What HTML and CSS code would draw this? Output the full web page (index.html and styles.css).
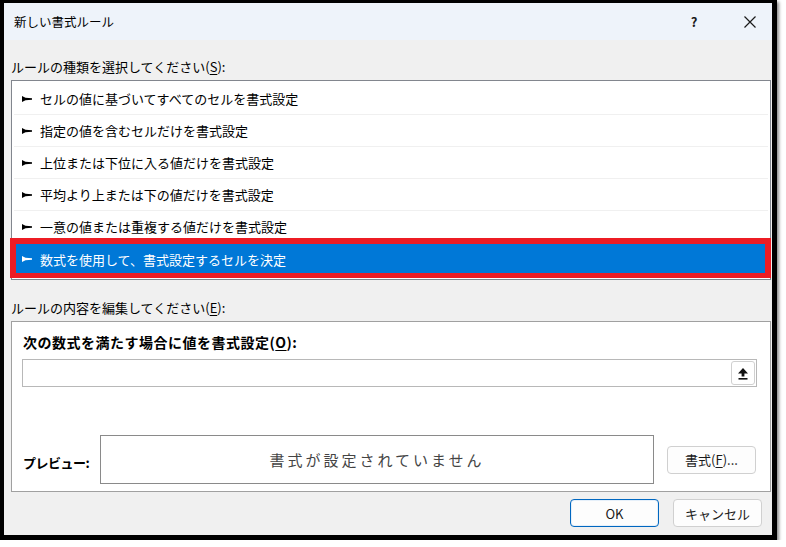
FILE: index.html
```html
<!DOCTYPE html>
<html lang="ja">
<head>
<meta charset="utf-8">
<title>新しい書式ルール</title>
<link rel="stylesheet" href="styles.css">
</head>
<body>
<div class="window">
  <div class="titlebar">
    <span class="title">新しい書式ルール</span>
    <span class="help">?</span>
    <span class="close"><svg width="12" height="12" viewBox="0 0 12 12"><path d="M0.5 0.5 L11.5 11.5 M11.5 0.5 L0.5 11.5" stroke="#1a1a1a" stroke-width="1.2" fill="none"/></svg></span>
  </div>
  <div class="content">
    <div class="label">ルールの種類を選択してください(<u>S</u>):</div>
    <div class="list">
      <div class="row"><svg class="arrow" width="10" height="6" viewBox="0 0 10 6"><path d="M0 0 L3.5 1.8 L10 2.2 L10 3.8 L3.5 4.2 L0 6 Z"/></svg>セルの値に基づいてすべてのセルを書式設定</div>
      <div class="row"><svg class="arrow" width="10" height="6" viewBox="0 0 10 6"><path d="M0 0 L3.5 1.8 L10 2.2 L10 3.8 L3.5 4.2 L0 6 Z"/></svg>指定の値を含むセルだけを書式設定</div>
      <div class="row"><svg class="arrow" width="10" height="6" viewBox="0 0 10 6"><path d="M0 0 L3.5 1.8 L10 2.2 L10 3.8 L3.5 4.2 L0 6 Z"/></svg>上位または下位に入る値だけを書式設定</div>
      <div class="row"><svg class="arrow" width="10" height="6" viewBox="0 0 10 6"><path d="M0 0 L3.5 1.8 L10 2.2 L10 3.8 L3.5 4.2 L0 6 Z"/></svg>平均より上または下の値だけを書式設定</div>
      <div class="row nosep"><svg class="arrow" width="10" height="6" viewBox="0 0 10 6"><path d="M0 0 L3.5 1.8 L10 2.2 L10 3.8 L3.5 4.2 L0 6 Z"/></svg>一意の値または重複する値だけを書式設定</div>
      <div class="row selected"><svg class="arrow" width="10" height="6" viewBox="0 0 10 6"><path d="M0 0 L3.5 1.8 L10 2.2 L10 3.8 L3.5 4.2 L0 6 Z"/></svg>数式を使用して、書式設定するセルを決定</div>
      <div class="highlight"></div>
    </div>
    <div class="label label2">ルールの内容を編集してください(<u>E</u>):</div>
    <div class="editbox">
      <div class="boldlabel">次の数式を満たす場合に値を書式設定(<u>O</u>):</div>
      <div class="formula">
        <span class="refbtn"><svg width="12" height="13" viewBox="0 0 12 13"><path d="M6 1 L11 6.5 L7.4 6.5 L7.4 9.5 L4.6 9.5 L4.6 6.5 L1 6.5 Z" fill="#111"/><rect x="1.5" y="11" width="9" height="1.6" fill="#111"/></svg></span>
      </div>
      <div class="preview-row">
        <span class="preview-label">プレビュー:</span>
        <div class="preview-box">書式が設定されていません</div>
        <span class="btn fmt">書式(<u>F</u>)...</span>
      </div>
    </div>
    <div class="buttons">
      <span class="btn ok">OK</span>
      <span class="btn cancel">キャンセル</span>
    </div>
  </div>
</div>
</body>
</html>
```
FILE: styles.css
```css
* { box-sizing: border-box; }
html, body { margin: 0; padding: 0; background: #ffffff; }
body {
  font-family: "Noto Sans CJK JP", "Noto Sans", sans-serif;
  color: #000;
  font-size: 13px;
}
.window {
  width: 777px;
  height: 540px;
  border-style: solid;
  border-color: #000;
  border-width: 3px 5px 5px 4px;
  background: #f0f0f0;
  box-shadow: 2px 2px 3px rgba(0,0,0,0.45);
  display: flex;
  flex-direction: column;
}
.titlebar {
  height: 37px;
  flex: none;
  background: #eef3fa;
  display: flex;
  align-items: center;
  padding-left: 10px;
}
.title { font-size: 12.5px; flex: 1; }
.help { font-size: 13px; font-weight: bold; width: 14px; text-align: center; margin-right: 42px; color: #1a1a1a; }
.close { width: 14px; display: flex; justify-content: center; margin-right: 15px; }
.content {
  padding: 0 1px 0 7px;
  display: flex;
  flex-direction: column;
}
.label {
  height: 20px;
  line-height: 20px;
  margin-top: 17px;
  white-space: nowrap;
}
.label2 { margin-top: 18px; }
u { text-decoration: underline; text-underline-offset: 2px; }
.list {
  position: relative;
  margin-top: 3px;
  height: 200px;
  border: 1px solid #82868e;
  background: #fff;
  padding: 2px 2px 0 2px;
}
.row {
  height: 32px;
  display: flex;
  align-items: center;
  padding-left: 8px;
  border-bottom: 1px solid #f0f0f0;
  white-space: nowrap;
}
.row.nosep { border-bottom-color: transparent; }
.arrow { margin-right: 8px; fill: #000; flex: none; }
.row.selected {
  background: #0078d7;
  color: #fff;
  border-bottom: none;
}
.row.selected .arrow { fill: #fff; }
.highlight {
  position: absolute;
  left: -2px;
  top: 157px;
  width: 761px;
  height: 40px;
  border: 6px solid #ed1c24;
  border-bottom-width: 5px;
}
.editbox {
  margin-top: 3px;
  height: 171px;
  border: 1px solid #a0a0a0;
  background: #fff;
  padding: 10px 14px 0 10px;
  display: flex;
  flex-direction: column;
}
.boldlabel {
  font-weight: bold;
  font-size: 14px;
  letter-spacing: 0.5px;
  height: 20px;
  line-height: 20px;
  padding-left: 1px;
  white-space: nowrap;
}
.formula {
  margin-top: 7px;
  width: 735px;
  height: 28px;
  border: 1px solid #b8b8b8;
  display: flex;
  justify-content: flex-end;
  align-items: center;
  padding-right: 1px;
}
.refbtn {
  width: 24px;
  height: 24px;
  border: 1px solid #d0d0d0;
  border-radius: 3px;
  background: #fff;
  display: flex;
  align-items: center;
  justify-content: center;
}
.preview-row {
  margin-top: 48px;
  display: flex;
  align-items: center;
  padding-left: 1px;
}
.preview-label {
  width: 77px;
  font-weight: bold;
  font-size: 13px;
  letter-spacing: -0.5px;
  padding-top: 6px;
}
.preview-box {
  width: 554px;
  height: 49px;
  border: 1px solid #8a8a8a;
  display: flex;
  align-items: center;
  justify-content: center;
  font-size: 15px;
  letter-spacing: 3px;
  color: #444;
}
.btn {
  display: flex;
  align-items: center;
  justify-content: center;
  height: 28px;
  width: 89px;
  border: 1px solid #d0d0d0;
  border-radius: 4px;
  background: #fdfdfd;
  font-size: 13px;
  color: #1a1a1a;
}
.fmt { margin-left: 13px; }
.buttons {
  margin-top: 7px;
  display: flex;
  justify-content: flex-end;
  gap: 14px;
  padding-right: 9px;
}
.ok { border: 1px solid #0067c0; box-shadow: inset 0 0 0 1px #e6f0fa; }
```
